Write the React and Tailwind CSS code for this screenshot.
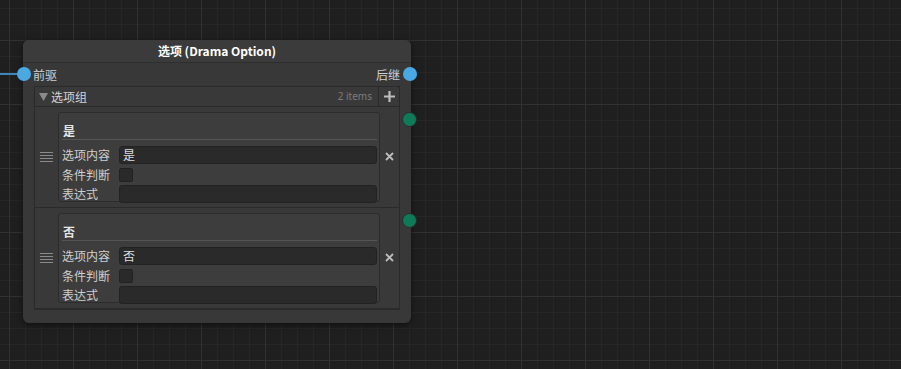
import React from "react";

const font = { fontFamily: '"Noto Sans CJK SC", "Noto Sans", sans-serif' };

function Handle() {
  return (
    <div className="flex flex-col gap-[2px] w-[13px]">
      <div className="h-px bg-[#8a8a8a]" />
      <div className="h-px bg-[#8a8a8a]" />
      <div className="h-px bg-[#8a8a8a]" />
      <div className="h-px bg-[#8a8a8a]" />
    </div>
  );
}

function Item({ title, value }) {
  return (
    <div className="relative flex h-[101px] items-stretch border-b border-[#2a2a2a]">
      <div className="w-[23px] flex items-center justify-center">
        <Handle />
      </div>
      <div className="my-[5px] w-[322px] rounded-[3px] border border-[#2c2c2c] bg-[#3d3d3d] pl-[3px] pr-[2px] pt-[11px]">
        <div className="h-[16px] border-b border-[#555] text-[12px] leading-[14px] font-bold text-[#e6e6e6] pl-px">
          {title}
        </div>
        <div className="mt-[6px] flex flex-col gap-[1px]">
          <div className="flex h-[18px] items-center">
            <div className="w-[57px] text-[12px] text-[#cfcfcf]">选项内容</div>
            <div className="flex-1 h-[18px] rounded-[3px] border border-[#222] bg-[#2a2a2a] pl-[3px] text-[12px] leading-[16px] text-[#dedede]">
              {value}
            </div>
          </div>
          <div className="flex h-[19px] items-center">
            <div className="w-[57px] text-[12px] text-[#cfcfcf]">条件判断</div>
            <div className="h-[14px] w-[14px] rounded-[2px] border border-[#222] bg-[#2a2a2a]" />
          </div>
          <div className="flex h-[18px] items-center">
            <div className="w-[57px] text-[12px] text-[#cfcfcf]">表达式</div>
            <div className="flex-1 h-[18px] rounded-[3px] border border-[#222] bg-[#2a2a2a]" />
          </div>
        </div>
      </div>
      <div className="flex-1 flex items-center justify-center pb-[2px]">
        <svg width="9" height="9" viewBox="0 0 9 9">
          <path d="M1 1L8 8M8 1L1 8" stroke="#bdbdbd" strokeWidth="1.8" />
        </svg>
      </div>
      <div className="absolute right-[-18px] top-[5px] h-[15px] w-[15px] rounded-full bg-[#0f7a57] border border-[#2a2a2a]" />
    </div>
  );
}

export default function App() {
  return (
    <div
      className="relative h-[369px] w-[901px] overflow-hidden bg-[#1f1f1f] bg-[linear-gradient(#313131_1px,transparent_1px),linear-gradient(90deg,#313131_1px,transparent_1px),linear-gradient(#262626_1px,transparent_1px),linear-gradient(90deg,#252525_1px,transparent_1px)] bg-size-[64px_64px,64px_64px,16px_16px,16px_16px] bg-position-[9px_40px,9px_40px,9px_8px,9px_8px]"
      style={font}
    >
      <div className="absolute left-0 top-[73px] h-[2px] w-[20px] bg-[#3c86bd]" />
      <div className="absolute left-[23px] top-[40px] h-[283px] w-[388px] rounded-[6px] bg-[#383838] shadow-[0_2px_6px_rgba(0,0,0,0.5)] flex flex-col">
        <div className="h-[23px] rounded-t-[6px] bg-[#3b3b3b] border-b border-[#2e2e2e] flex items-center justify-center text-[12px] font-bold text-white">
          选项 (Drama Option)
        </div>
        <div className="relative h-[23px] flex items-center justify-between px-[10px] text-[12px] text-[#cfcfcf]">
          <div className="absolute left-[-6px] top-[4px] h-[14px] w-[14px] rounded-full bg-[#4aa9e2]" />
          <span>前驱</span>
          <span className="mr-[1px]">后继</span>
          <div className="absolute right-[-6px] top-[4px] h-[14px] w-[14px] rounded-full bg-[#4aa9e2]" />
        </div>
        <div className="mx-[11px] border border-[#2a2a2a]">
          <div className="flex h-[20px] items-center border-b border-[#2a2a2a] bg-[#393939]">
            <svg width="9" height="8" viewBox="0 0 9 8" className="ml-[4px]">
              <path d="M0 0H9L4.5 8Z" fill="#8a8a8a" />
            </svg>
            <span className="ml-[3px] text-[12px] text-[#d4d4d4]">选项组</span>
            <span className="ml-auto mr-[6px] text-[10px] text-[#7c7c7c]" style={{ fontFamily: '"Noto Sans", sans-serif' }}>
              2 items
            </span>
            <div className="h-full w-[21px] border-l border-[#2a2a2a] flex items-center justify-center">
              <svg width="11" height="11" viewBox="0 0 11 11">
                <path d="M5.5 0V11M0 5.5H11" stroke="#bdbdbd" strokeWidth="2.2" />
              </svg>
            </div>
          </div>
          <div className="bg-[#393939]">
            <Item title="是" value="是" />
            <Item title="否" value="否" />
          </div>
        </div>
      </div>
    </div>
  );
}
